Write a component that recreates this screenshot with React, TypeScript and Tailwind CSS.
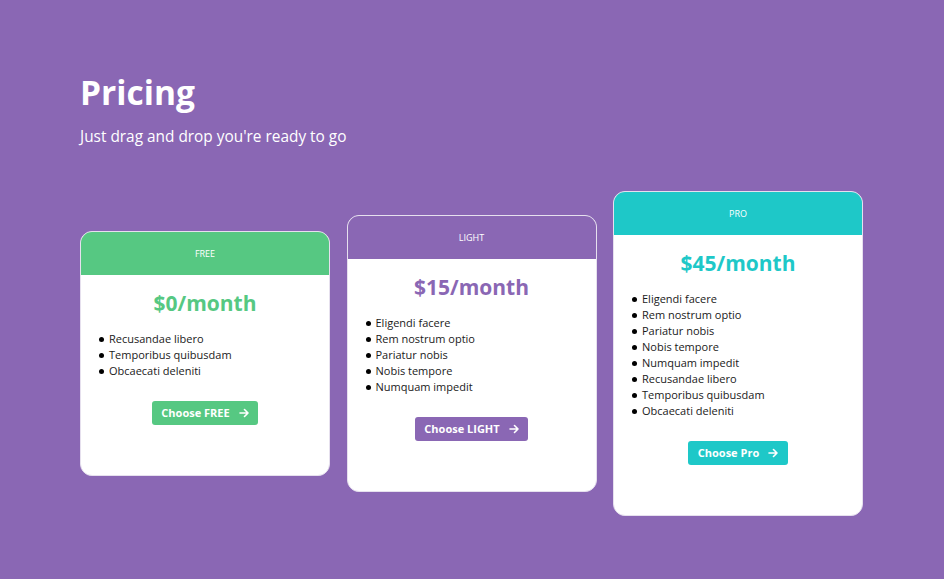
const plans = [
  {
    name: "FREE",
    price: "$0/month",
    color: "free",
    cta: "Choose FREE",
    items: ["Recusandae libero", "Temporibus quibusdam", "Obcaecati deleniti"],
  },
  {
    name: "LIGHT",
    price: "$15/month",
    color: "light",
    cta: "Choose LIGHT",
    items: ["Eligendi facere", "Rem nostrum optio", "Pariatur nobis", "Nobis tempore", "Numquam impedit"],
  },
  {
    name: "PRO",
    price: "$45/month",
    color: "pro",
    cta: "Choose Pro",
    items: [
      "Eligendi facere",
      "Rem nostrum optio",
      "Pariatur nobis",
      "Nobis tempore",
      "Numquam impedit",
      "Recusandae libero",
      "Temporibus quibusdam",
      "Obcaecati deleniti",
    ],
  },
]

const bg: Record<string, string> = {
  free: "bg-[#56c882]",
  light: "bg-[#8a67b4]",
  pro: "bg-[#1ec8c8]",
}
const fg: Record<string, string> = {
  free: "text-[#56c882]",
  light: "text-[#8a67b4]",
  pro: "text-[#1ec8c8]",
}

function Arrow() {
  return (
    <svg width="10" height="10" viewBox="0 0 10 10" fill="none" stroke="white" strokeWidth="1.6" strokeLinecap="round" strokeLinejoin="round">
      <path d="M1 5h8M5.5 1.5L9 5l-3.5 3.5" />
    </svg>
  )
}

export default function App() {
  return (
    <div className="min-h-[579px] w-full bg-[#8a67b4] px-[80px] pt-[70px] font-['Open_Sans',sans-serif]">
      <h1 className="text-[33.5px] font-bold leading-[44px] text-white">Pricing</h1>
      <p className="mt-[12px] text-[15.4px] leading-[22px] text-white">Just drag and drop you're ready to go</p>
      <div className="mt-[43px] flex items-center gap-[16.5px]">
        {plans.map((p) => (
          <div key={p.name} className="w-[250px] overflow-hidden rounded-[12px] border border-[#e6e0ee] bg-white">
            <div className={`flex h-[43px] items-center justify-center text-[9px] text-white ${bg[p.color]}`}>{p.name}</div>
            <div className="flex flex-col items-center pb-[50px] pt-[14px]">
              <div className={`text-[21px] font-bold leading-[28px] ${fg[p.color]}`}>{p.price}</div>
              <ul className="mt-[14px] w-full px-[18px]">
                {p.items.map((it, i) => (
                  <li key={i} className="flex h-[16px] items-center gap-[5px] text-[11px] text-[#1a1a1a]">
                    <span className="h-[5px] w-[5px] rounded-full bg-black" />
                    {it}
                  </li>
                ))}
              </ul>
              <button className={`mt-[22px] flex h-[24px] items-center gap-[9px] rounded-[3px] px-[9.5px] text-[11px] font-bold text-white ${bg[p.color]}`}>
                {p.cta}
                <Arrow />
              </button>
            </div>
          </div>
        ))}
      </div>
    </div>
  )
}
